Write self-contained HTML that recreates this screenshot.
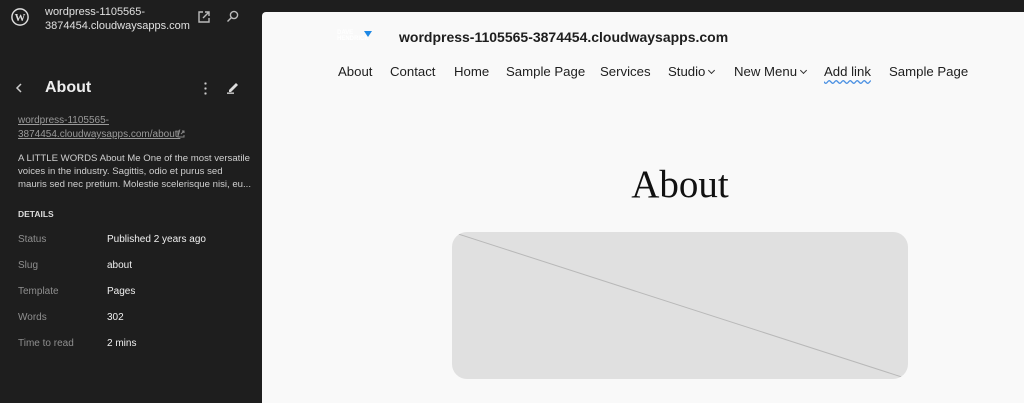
<!DOCTYPE html>
<html><head><meta charset="utf-8"><style>
*{margin:0;padding:0;box-sizing:border-box}
body{width:1024px;height:403px;background:#1e1e1e;font-family:"Liberation Sans",sans-serif;position:relative;overflow:hidden}
.a{position:absolute;white-space:nowrap}
.side{color:#e0e0e0}
.canvas{position:absolute;left:262px;top:12px;width:762px;height:391px;background:#f9f9f9;border-top-left-radius:4px}
.nav span{position:absolute;top:52px;font-size:13.2px;color:#1e1e1e}
.lbl{color:#8f8f8f;font-size:10px;left:18px}
.val{color:#f0f0f0;font-size:10px;left:107px}
.chev{display:inline-block;width:5px;height:5px;border-right:1.3px solid #333;border-bottom:1.3px solid #333;transform:rotate(45deg);margin-left:4px;position:relative;top:-3px}
</style></head><body>
<svg class="a" style="left:11px;top:8px" width="18" height="18" viewBox="0 0 20 20"><circle cx="10" cy="10" r="9" fill="none" stroke="#ddd" stroke-width="1.6"/><text x="10" y="14.5" font-size="12" font-family="Liberation Serif" font-weight="bold" fill="#ddd" text-anchor="middle">W</text></svg>
<div class="a side" style="left:45px;top:5px;font-size:11px;line-height:14px">wordpress-1105565-<br>3874454.cloudwaysapps.com</div>
<svg class="a" style="left:197px;top:10px" width="14" height="14" viewBox="0 0 14 14" fill="none" stroke="#bbb" stroke-width="1.4"><path d="M6 2H2v10h10V8M8 2h4v4M12 2L6 8"/></svg>
<svg class="a" style="left:226px;top:10px" width="13" height="13" viewBox="0 0 13 13" fill="none" stroke="#bbb" stroke-width="1.4"><circle cx="8" cy="5" r="3.6"/><path d="M5.5 7.5L1.5 11.5"/></svg>
<svg class="a" style="left:15px;top:83px" width="8" height="10" viewBox="0 0 8 10" fill="none" stroke="#ccc" stroke-width="1.5"><path d="M6 1L2 5l4 4"/></svg>
<div class="a" style="left:45px;top:79px;font-size:16px;font-weight:bold;color:#eee">About</div>
<div class="a" style="left:204px;top:81px;width:3px;height:14px;background:radial-gradient(circle,#ccc 1px,transparent 1.3px) 0 0/3px 5px"></div>
<svg class="a" style="left:226px;top:81px" width="13" height="13" viewBox="0 0 13 13"><path d="M3 9L10 2l2 2-7 7H3z" fill="#ddd"/><rect x="1" y="11.5" width="7" height="1.3" fill="#ddd"/></svg>
<div class="a" style="left:18px;top:114px;font-size:10px;line-height:14px;color:#9a9a9a;text-decoration:underline">wordpress-1105565-<br>3874454.cloudwaysapps.com/about/</div>
<svg class="a" style="left:177px;top:130px" width="8" height="8" viewBox="0 0 8 8" fill="none" stroke="#888" stroke-width="1"><path d="M3 1H1v6h6V5M5 1h2v2M7 1L4 4"/></svg>
<div class="a" style="left:18px;top:152px;font-size:9.6px;line-height:13px;color:#cfcfcf">A LITTLE WORDS About Me One of the most versatile<br>voices in the industry. Sagittis, odio et purus sed<br>mauris sed nec pretium. Molestie scelerisque nisi, eu...</div>
<div class="a" style="left:18px;top:209px;font-size:8.5px;font-weight:bold;color:#ddd">DETAILS</div>
<div class="a lbl" style="top:234px">Status</div><div class="a val" style="top:234px">Published 2 years ago</div>
<div class="a lbl" style="top:260px">Slug</div><div class="a val" style="top:260px">about</div>
<div class="a lbl" style="top:286px">Template</div><div class="a val" style="top:286px">Pages</div>
<div class="a lbl" style="top:312px">Words</div><div class="a val" style="top:312px">302</div>
<div class="a lbl" style="top:338px">Time to read</div><div class="a val" style="top:338px">2 mins</div>
<div class="canvas">
<div class="a" style="left:75px;top:18px;font-size:6px;line-height:6px;color:#fff;font-weight:bold">DAVE<br>HENDRICK</div>
<div class="a" style="left:102px;top:19px;width:0;height:0;border-left:4px solid transparent;border-right:4px solid transparent;border-top:6px solid #1e88e5"></div>
<div class="a" style="left:137px;top:17px;font-size:14px;font-weight:bold;color:#1e1e1e">wordpress-1105565-3874454.cloudwaysapps.com</div>
<div class="nav">
<span style="left:76px">About</span><span style="left:128px">Contact</span><span style="left:192px">Home</span><span style="left:244px">Sample Page</span><span style="left:338px">Services</span><span style="left:406px">Studio<i class="chev"></i></span><span style="left:472px">New Menu<i class="chev"></i></span><span style="left:562px;text-decoration:underline wavy #4a90e2;text-underline-offset:3px">Add link</span><span style="left:627px">Sample Page</span>
</div>
<div class="a" style="left:0;width:836px;text-align:center;top:150px;font-family:'Liberation Serif',serif;font-size:39px;color:#111">About</div>
<svg class="a" style="left:190px;top:220px" width="456" height="147"><defs><clipPath id="c"><rect width="456" height="147" rx="15"/></clipPath></defs><rect width="456" height="147" rx="15" fill="#e0e0e0"/><line x1="0" y1="0" x2="456" y2="147" stroke="#b8b8b8" stroke-width="1" clip-path="url(#c)"/></svg>
</div>
</body></html>
